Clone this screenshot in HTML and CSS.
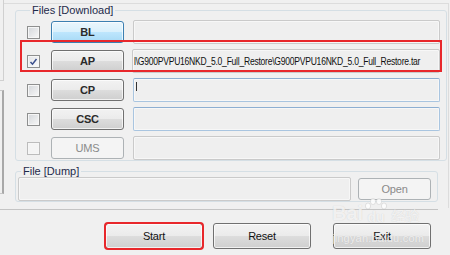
FILE: index.html
```html
<!DOCTYPE html>
<html lang="en">
  <head>
    <meta charset="UTF-8" />
    <meta name="viewport" content="width=device-width, initial-scale=1.0" />
    <title>Odin</title>
    <link rel="stylesheet" href="styles.css">
  </head>
  <body>
    <div class="window">
      <div class="top-area">
        <div class="rail">
          <div class="rail-box upper"></div>
          <div class="rail-box lower"></div>
        </div>
        <div class="main">
          <fieldset class="group files">
            <legend>Files [Download]</legend>
            <div class="file-row">
              <span class="check"></span>
              <button class="btn hot">BL</button>
              <div class="field"></div>
            </div>
            <div class="file-row">
              <span class="check checked">
                <svg width="11" height="11" viewBox="0 0 11 11"><path d="M2.5 6 L4.5 8.2 L8.5 3" fill="none" stroke="#3b4f8c" stroke-width="1.5"/></svg>
              </span>
              <button class="btn">AP</button>
              <div class="field path"><span>l\G900PVPU16NKD_5.0_Full_Restore\G900PVPU16NKD_5.0_Full_Restore.tar</span></div>
            </div>
            <div class="file-row">
              <span class="check"></span>
              <button class="btn">CP</button>
              <div class="field focus"><span class="caret"></span></div>
            </div>
            <div class="file-row">
              <span class="check"></span>
              <button class="btn">CSC</button>
              <div class="field focus"></div>
            </div>
            <div class="file-row">
              <span class="check off"></span>
              <button class="btn" disabled>UMS</button>
              <div class="field"></div>
            </div>
          </fieldset>
          <fieldset class="group dump">
            <legend>File [Dump]</legend>
            <div class="dump-row">
              <div class="field"></div>
              <button class="btn" disabled>Open</button>
            </div>
          </fieldset>
        </div>
      </div>
      <div class="separator"></div>
      <div class="actions">
        <button class="btn big flagged">Start</button>
        <button class="btn big reset">Reset</button>
        <button class="btn big exit">Exit</button>
      </div>

      <!-- annotation + watermark over the screenshot -->
      <div class="mark-ap"></div>
      <div class="watermark">
        <div class="wm-logo">
          <span>Bai</span>
          <span class="wm-paw">
            <svg width="24" height="12" viewBox="0 0 24 12">
              <g fill="rgba(255,255,255,0.8)" stroke="rgba(150,150,150,0.3)" stroke-width="0.8">
                <ellipse cx="4" cy="8" rx="2.6" ry="3"/>
                <ellipse cx="9" cy="3.5" rx="2.6" ry="3"/>
                <ellipse cx="15" cy="3.5" rx="2.6" ry="3"/>
                <ellipse cx="20" cy="8" rx="2.6" ry="3"/>
              </g>
            </svg>
            <span>du</span>
          </span>
          <span class="wm-cn">经验</span>
        </div>
        <div class="wm-url">jingyan.baidu.com</div>
      </div>
    </div>
  </body>
</html>
```

FILE: styles.css
```css
* {
  box-sizing: border-box;
}

body {
  margin: 0;
  background-color: #f0f0f0;
  font-family: "Liberation Sans", Arial, sans-serif;
  font-size: 11px;
  color: #1a1a1a;
}

.window {
  position: relative;
  width: 450px;
  height: 255px;
  overflow: hidden;
  display: flex;
  flex-direction: column;
}

.top-area {
  display: flex;
  height: 208px;
}

/* bits of the panel cut off on the left */
.rail {
  width: 4px;
  display: flex;
  flex-direction: column;
}

.rail-box {
  width: 4px;
  border-right: 1px solid #d0d0d0;
}

.rail-box.upper {
  height: 81px;
  border-bottom: 1px solid #d0d0d0;
}

.rail-box.lower {
  height: 104px;
  margin-top: 9px;
  border-top: 1px solid #c8c8c8;
  border-right: 2px solid #a8a8a8;
  border-bottom: 1px solid #c8c8c8;
}

.main {
  width: 445px;
  margin-top: 3px;
  padding-left: 11px;
  border-top: 1px solid #dcdcdc;
  border-right: 1px solid #dcdcdc;
}

.group {
  margin: 0;
  border: 1px solid #d5dfe5;
  border-radius: 3px;
  min-width: 0;
}

.group legend {
  padding: 0 2px;
  margin-left: 3px;
  line-height: 12px;
  color: #1e2a4a;
}

.files {
  width: 432px;
  padding: 4px 6px 0 11px;
  display: flex;
  flex-direction: column;
  gap: 5px;
}

.file-row {
  display: flex;
  align-items: center;
  height: 24px;
}

.check {
  width: 13px;
  height: 13px;
  flex: none;
  border: 1px solid #8e8f8f;
  background: linear-gradient(135deg, #d3d6da, #f8f8f8);
  box-shadow: inset 0 0 0 1px #f6f6f6;
}

.check svg {
  display: block;
}

.check.checked {
  background: linear-gradient(135deg, #e2e4e8, #fbfbfb);
}

.check.off {
  border-color: #bcbcbc;
  background: #f4f4f4;
}

.btn {
  font-family: inherit;
  font-size: 11px;
  color: #111;
  border: 1px solid #707070;
  border-radius: 3px;
  padding: 0;
  background: linear-gradient(#f2f2f2 0%, #ebebeb 50%, #dddddd 50%, #cfcfcf 100%);
  box-shadow: inset 0 0 0 1px rgba(255, 255, 255, 0.7);
  letter-spacing: -0.2px;
}

.file-row .btn {
  width: 73px;
  height: 22px;
  margin-left: 11px;
  font-weight: bold;
  color: #2a2a2a;
}

.btn.hot {
  border-color: #3c7fb1;
  background: linear-gradient(#eaf6fd 0%, #d9f0fc 50%, #bee6fd 50%, #a7d9f5 100%);
}

.btn:disabled {
  border-color: #adb2b5;
  background: #f4f4f4;
  color: #8a8a8a;
  box-shadow: none;
}

.file-row .btn:disabled {
  font-weight: normal;
}

.field {
  height: 24px;
  border: 1px solid #cacaca;
  border-radius: 2px;
  background-color: #efefef;
  box-shadow: inset 0 0 0 1px #f7f7f7;
}

.file-row .field {
  width: 307px;
  margin-left: 9px;
}

.field.focus {
  border-color: #a9c5e0;
  border-top-color: #8eafd2;
}

.field.path {
  display: flex;
  align-items: center;
  padding-left: 1px;
  margin-left: 8px;
  width: 308px;
  overflow: hidden;
  white-space: nowrap;
  font-size: 10.5px;
  color: #111;
}

/* the screenshot is squeezed sideways, so is its path text */
.field.path span {
  display: inline-block;
  letter-spacing: -0.3px;
  transform: scaleX(0.815);
  transform-origin: left center;
}

.caret {
  display: block;
  width: 1px;
  height: 9px;
  margin: 3px 0 0 2px;
  background-color: #333;
}

.dump {
  width: 423px;
  margin-top: 4px;
  padding: 0 6px 0 2px;
}

.dump-row {
  display: flex;
  align-items: center;
  gap: 7px;
  height: 24px;
}

.dump-row .field {
  width: 333px;
}

.dump-row .btn {
  width: 73px;
  height: 22px;
}

.separator {
  width: 438px;
  height: 1px;
  margin-top: 1px;
  background-color: #c4c4c4;
}

.actions {
  display: flex;
  padding: 13px 0 0 105px;
}

.btn.big {
  width: 98px;
  height: 26px;
}

.btn.reset {
  margin-left: 10px;
}

.btn.exit {
  margin-left: 22px;
}

.btn.flagged {
  outline: 2px solid #e8272b;
  outline-offset: -1px;
}

.mark-ap {
  position: absolute;
  left: 20px;
  top: 40px;
  width: 422px;
  height: 32px;
  border: 2px solid #e8272b;
}

.watermark {
  position: absolute;
  left: 332px;
  top: 198px;
  color: rgba(255, 255, 255, 0.72);
  text-shadow: 0 0 1px rgba(120, 120, 120, 0.3);
  pointer-events: none;
}

.wm-logo {
  display: flex;
  align-items: flex-end;
  height: 26px;
  font-size: 20px;
  font-weight: bold;
  line-height: 22px;
}

.wm-paw {
  display: flex;
  flex-direction: column;
  align-items: center;
  margin-left: 1px;
  font-size: 14px;
  line-height: 14px;
}

.wm-cn {
  margin-left: 3px;
  font-family: "Noto Sans CJK SC", sans-serif;
  font-size: 14px;
  font-weight: normal;
  line-height: 18px;
}

.wm-url {
  margin-top: 8px;
  font-size: 11px;
  letter-spacing: 0.2px;
}
```
